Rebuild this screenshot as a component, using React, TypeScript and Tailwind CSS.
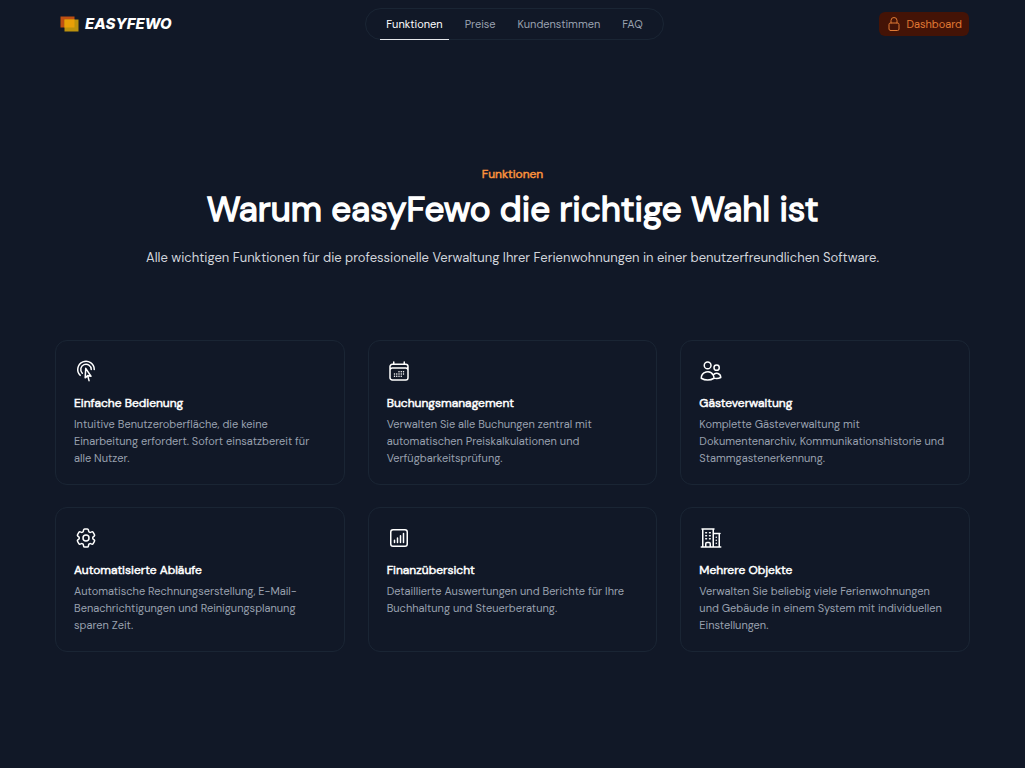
import type { IconType } from "react-icons";
import {
  HiOutlineBuildingOffice2,
  HiOutlineCalendarDays,
  HiOutlineChartBarSquare,
  HiOutlineCog6Tooth,
  HiOutlineCursorArrowRipple,
  HiOutlineLockClosed,
  HiOutlineUsers,
} from "react-icons/hi2";

type Feature = { title: string; text: string; icon: IconType };

const navItems = ["Funktionen", "Preise", "Kundenstimmen", "FAQ"];

const features: Feature[] = [
  {
    title: "Einfache Bedienung",
    text: "Intuitive Benutzeroberfläche, die keine Einarbeitung erfordert. Sofort einsatzbereit für alle Nutzer.",
    icon: HiOutlineCursorArrowRipple,
  },
  {
    title: "Buchungsmanagement",
    text: "Verwalten Sie alle Buchungen zentral mit automatischen Preiskalkulationen und Verfügbarkeitsprüfung.",
    icon: HiOutlineCalendarDays,
  },
  {
    title: "Gästeverwaltung",
    text: "Komplette Gästeverwaltung mit Dokumentenarchiv, Kommunikationshistorie und Stammgastenerkennung.",
    icon: HiOutlineUsers,
  },
  {
    title: "Automatisierte Abläufe",
    text: "Automatische Rechnungserstellung, E-Mail-Benachrichtigungen und Reinigungsplanung sparen Zeit.",
    icon: HiOutlineCog6Tooth,
  },
  {
    title: "Finanzübersicht",
    text: "Detaillierte Auswertungen und Berichte für Ihre Buchhaltung und Steuerberatung.",
    icon: HiOutlineChartBarSquare,
  },
  {
    title: "Mehrere Objekte",
    text: "Verwalten Sie beliebig viele Ferienwohnungen und Gebäude in einem System mit individuellen Einstellungen.",
    icon: HiOutlineBuildingOffice2,
  },
];

function Logo() {
  return (
    <a
      href="#"
      className="flex items-center gap-1.5 font-['Inter',sans-serif] text-[15px] leading-6 font-extrabold text-white italic"
    >
      <svg width="19" height="16" viewBox="0 0 19 16" aria-hidden="true">
        <rect x="0.5" y="0.5" width="14" height="11" fill="#bf4f12" />
        <rect x="4.5" y="3.5" width="14" height="12" fill="#bd920d" />
        <rect x="4.5" y="3.5" width="10" height="8" fill="#e9a007" />
      </svg>
      EASYFEWO
    </a>
  );
}

function Header() {
  return (
    <header className="mx-auto grid w-full max-w-[915px] grid-cols-[1fr_auto_1fr] items-center pt-2 pr-px pl-[5px]">
      <Logo />
      <nav className="flex h-8 rounded-full border border-[#1a2534] px-[9px]">
        {navItems.map((item, i) => (
          <a
            key={item}
            href="#"
            className={
              i === 0
                ? "relative flex items-center px-[11px] text-[11px] text-white after:absolute after:inset-x-[5px] after:-bottom-px after:h-px after:bg-gray-200"
                : "flex items-center px-[11px] text-[11px] text-gray-400"
            }
          >
            {item}
          </a>
        ))}
      </nav>
      <button
        type="button"
        className="flex h-6 items-center gap-1 justify-self-end rounded-md bg-[#441306] px-[7px] text-[11px] text-[#e07a35]"
      >
        <HiOutlineLockClosed className="size-4" />
        Dashboard
      </button>
    </header>
  );
}

function FeatureCard({ title, text, icon: Icon }: Feature) {
  return (
    <article className="rounded-xl border border-[#1a2534] px-[18px] pt-[18px] pb-[17px]">
      <Icon className="size-6 text-white" />
      <h3 className="mt-2.5 text-[12px] leading-5 text-white [-webkit-text-stroke:0.04em]">{title}</h3>
      <p className="mt-[3px] text-[11px] leading-[17px] text-gray-400">{text}</p>
    </article>
  );
}

export default function App() {
  return (
    <div className="min-h-screen bg-[#111827] px-6 font-['DM_Sans','Inter',sans-serif] antialiased">
      <Header />
      <main className="mx-auto w-full max-w-[915px] pt-[124px] pb-28">
        <div className="text-center">
          <p className="text-[12px] leading-5 text-[#fb923c] [-webkit-text-stroke:0.04em]">Funktionen</p>
          <h2 className="mt-1 text-[35px] leading-[42px] text-white [-webkit-text-stroke:0.04em]">
            Warum easyFewo die richtige Wahl ist
          </h2>
          <p className="mt-4 text-[13px] leading-6 text-gray-300">
            Alle wichtigen Funktionen für die professionelle Verwaltung Ihrer Ferienwohnungen in einer
            benutzerfreundlichen Software.
          </p>
        </div>
        <section className="mt-[70px] grid grid-cols-3 gap-x-[23px] gap-y-[22px]">
          {features.map((feature) => (
            <FeatureCard key={feature.title} {...feature} />
          ))}
        </section>
      </main>
    </div>
  );
}
